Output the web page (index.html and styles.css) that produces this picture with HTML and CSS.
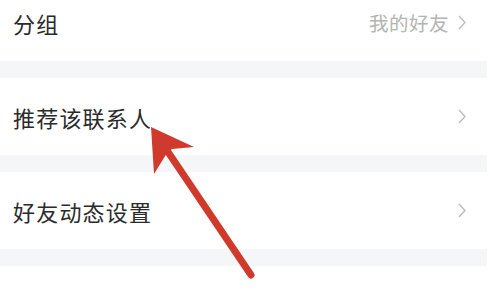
FILE: index.html
```html
<!DOCTYPE html>
<html lang="zh-CN">
<head>
  <meta charset="UTF-8">
  <meta name="viewport" content="width=device-width, initial-scale=1.0">
  <title>联系人设置</title>
  <link rel="stylesheet" href="styles.css">
</head>
<body>
  <div class="list">
    <div class="row">
      <span class="label">分组</span>
      <span class="value">我的好友</span>
      <svg class="chevron" viewBox="0 0 10 16"><path d="M2 1.5 L8 8 L2 14.5"/></svg>
    </div>
    <div class="gap"></div>
    <div class="row">
      <span class="label">推荐该联系人</span>
      <svg class="chevron" viewBox="0 0 10 16"><path d="M2 1.5 L8 8 L2 14.5"/></svg>
    </div>
    <div class="gap"></div>
    <div class="row">
      <span class="label">好友动态设置</span>
      <svg class="chevron" viewBox="0 0 10 16"><path d="M2 1.5 L8 8 L2 14.5"/></svg>
    </div>
    <div class="gap"></div>
    <div class="row short"></div>
  </div>

  <svg class="arrow" viewBox="0 0 490 292">
    <line x1="162" y1="143" x2="251" y2="275" />
    <path d="M151 127 L194 147 L172 149 L167 153 L154 174 Z" />
  </svg>
</body>
</html>
```

FILE: styles.css
```css
html, body {
  margin: 0;
  height: 292px;
  overflow: hidden;
}
body {
  background: #ffffff;
  font-family: "Noto Sans CJK SC", "Noto Sans", sans-serif;
  position: relative;
}
.list {
  margin-top: -16px;
}
.row {
  height: 77px;
  display: flex;
  align-items: center;
  padding: 0 23px 0 13px;
  background: #ffffff;
}
.row.short {
  height: 25px;
}
.label {
  flex: 1;
  font-size: 22px;
  color: #2a2a2a;
  letter-spacing: 1.2px;
}
.value {
  font-size: 19.5px;
  color: #b4b4b4;
  letter-spacing: 0.5px;
  margin-right: 8px;
}
.chevron {
  width: 10px;
  height: 17px;
  fill: none;
  stroke: #bdbdbd;
  stroke-width: 1.4;
}
.gap {
  height: 17px;
  background: #f5f6f8;
  margin-right: 3px;
}
.arrow {
  position: absolute;
  top: 0;
  left: 0;
  width: 490px;
  height: 292px;
}
.arrow line {
  stroke: #cf3a2c;
  stroke-width: 7;
  stroke-linecap: round;
}
.arrow path {
  fill: #cf3a2c;
}
```
